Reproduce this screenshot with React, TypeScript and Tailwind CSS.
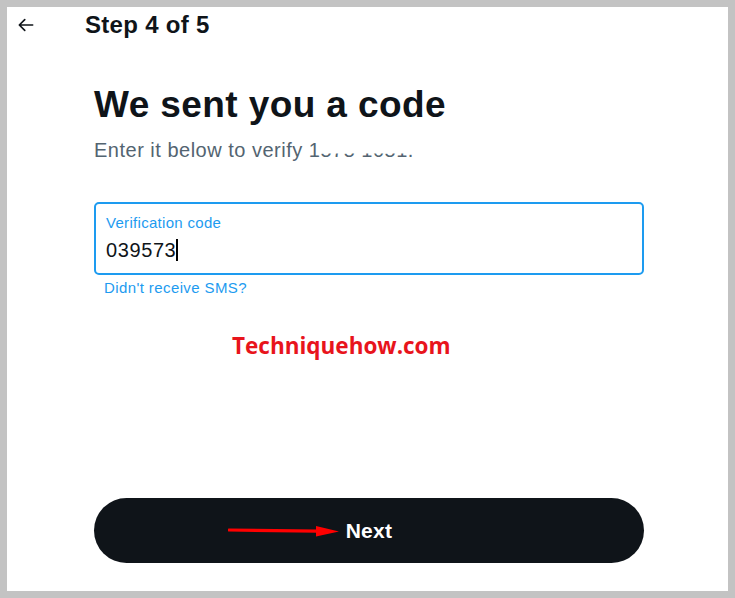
import React from "react";

function BackArrow() {
  return (
    <svg width="20" height="20" viewBox="0 0 24 24" fill="none">
      <path
        d="M20 12H4.5M10.5 5.5L4 12l6.5 6.5"
        stroke="#0f1419"
        strokeWidth="2"
        strokeLinecap="round"
        strokeLinejoin="round"
      />
    </svg>
  );
}

function RedArrow() {
  return (
    <svg width="112" height="16" viewBox="0 0 112 16" className="absolute left-[134px] top-[25px]">
      <path d="M1 7 L90 8.2" stroke="#ff0000" strokeWidth="3.2" strokeLinecap="round" />
      <polygon points="88,3 111,8.5 88,13.5" fill="#ff0000" />
    </svg>
  );
}

export default function App() {
  return (
    <div className="w-[735px] h-[598px] bg-[#c3c3c3] p-[7px] font-['Liberation_Sans',Arial,sans-serif]">
      <div className="w-full h-full bg-white flex flex-col">
        <header className="h-[35px] flex items-center">
          <div className="w-[78px] pl-[9px] flex items-center">
            <BackArrow />
          </div>
          <h1 className="text-[24px] font-bold text-[#0f1419] leading-none tracking-[0.3px]">Step 4 of 5</h1>
        </header>

        <main className="pl-[87px] w-[637px] flex flex-col">
          <h2 className="mt-[43px] text-[37px] leading-[40px] font-bold text-[#0f1419] tracking-[0.4px]">
            We sent you a code
          </h2>
          <p className="mt-[13px] text-[20px] leading-[25px] text-[#536471] tracking-[0.5px]">
            Enter it below to verify 1
            <span className="inline-block [clip-path:inset(62%_0_0_0)]">575 1051.</span>
          </p>

          <div className="mt-[39px] h-[73px] border-2 border-[#1d9bf0] rounded-[5px] pl-[10px] flex flex-col">
            <label className="mt-[10px] text-[15px] leading-[18px] text-[#1d9bf0] tracking-[0.3px]">Verification code</label>
            <div className="mt-[6px] flex items-center">
              <span className="text-[20px] leading-[24px] text-[#0f1419] tracking-[0.6px]">039573</span>
              <span className="w-[2px] h-[22px] bg-black" />
            </div>
          </div>
          <a className="mt-[4px] ml-[10px] text-[15px] leading-[18px] text-[#1d9bf0] tracking-[0.4px]">Didn't receive SMS?</a>

          <div className="mt-[34px] pl-[138px] text-[22.5px] leading-[30px] font-bold text-[#e8141c] font-['Open_Sans',sans-serif]">
            Techniquehow.com
          </div>

          <button className="relative mt-[137px] h-[65px] w-[550px] rounded-full bg-[#0f1419] flex items-center justify-center">
            <RedArrow />
            <span className="text-[21px] font-bold text-white tracking-[0.3px]">Next</span>
          </button>
        </main>
      </div>
    </div>
  );
}
